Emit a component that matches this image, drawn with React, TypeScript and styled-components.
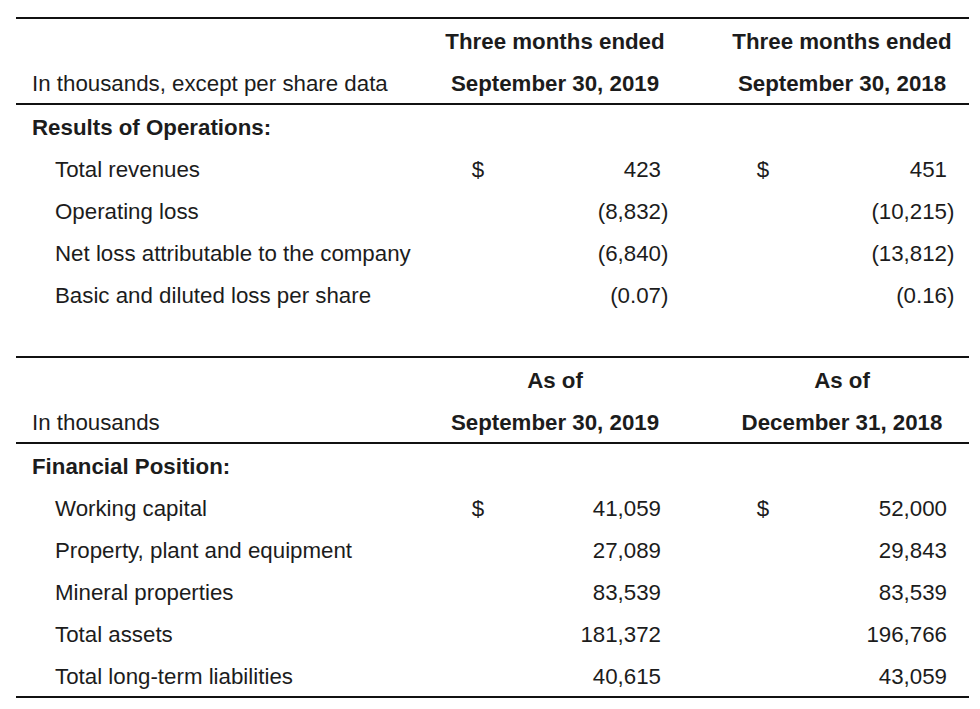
import styled, { createGlobalStyle } from "styled-components";

const GlobalStyle = createGlobalStyle`
  html, body {
    margin: 0;
    padding: 0;
    background: #ffffff;
  }
  body {
    font-family: "Liberation Sans", Arial, sans-serif;
    color: #1c1c1c;
  }
`;

const Page = styled.div`
  width: 980px;
  height: 709px;
  box-sizing: border-box;
  padding: 17px 0 0 16px;
  background: #ffffff;
`;

const Table = styled.div<{ $gapTop?: number }>`
  width: 953px;
  margin-top: ${(p) => p.$gapTop ?? 0}px;
  border-top: 2px solid #111;
  border-bottom: ${(p) => (p.$gapTop ? "2px solid #111" : "none")};
  font-size: 22.3px;
`;

const Row = styled.div`
  display: grid;
  grid-template-columns: 414px 250px 35px 254px;
  height: 42px;
  box-sizing: border-box;
  padding-top: 4px;
  align-items: center;
`;

const HeaderRow = styled(Row)<{ $ruled?: boolean }>`
  height: ${(p) => (p.$ruled ? 44 : 42)}px;
  border-bottom: ${(p) => (p.$ruled ? "2px solid #111" : "none")};
`;

const Label = styled.div<{ $indent?: boolean; $bold?: boolean }>`
  padding-left: ${(p) => (p.$indent ? 39 : 16)}px;
  font-weight: ${(p) => (p.$bold ? 700 : 400)};
  white-space: nowrap;
`;

const ColHead = styled.div`
  text-align: center;
  font-weight: 700;
  white-space: nowrap;
`;

const Figure = styled.div<{ $lead: number; $trail: number }>`
  display: grid;
  grid-template-columns: ${(p) => `${p.$lead}px 1fr ${p.$trail}px`};
  white-space: nowrap;
`;

const Dollar = styled.span`
  text-align: center;
`;

const Num = styled.span`
  text-align: right;
`;

const Paren = styled.span`
  text-align: left;
`;

type Line = { label: string; a: string; b: string; dollar?: boolean };

const ops: Line[] = [
  { label: "Total revenues", a: "423", b: "451", dollar: true },
  { label: "Operating loss", a: "(8,832)", b: "(10,215)" },
  { label: "Net loss attributable to the company", a: "(6,840)", b: "(13,812)" },
  { label: "Basic and diluted loss per share", a: "(0.07)", b: "(0.16)" },
];

const position: Line[] = [
  { label: "Working capital", a: "41,059", b: "52,000", dollar: true },
  { label: "Property, plant and equipment", a: "27,089", b: "29,843" },
  { label: "Mineral properties", a: "83,539", b: "83,539" },
  { label: "Total assets", a: "181,372", b: "196,766" },
  { label: "Total long-term liabilities", a: "40,615", b: "43,059" },
];

const Amount = ({ value, dollar, lead, trail }: { value: string; dollar?: boolean; lead: number; trail: number }) => {
  const neg = value.endsWith(")");
  return (
    <Figure $lead={lead} $trail={trail}>
      <Dollar>{dollar ? "$" : ""}</Dollar>
      <Num>{neg ? value.slice(0, -1) : value}</Num>
      <Paren>{neg ? ")" : ""}</Paren>
    </Figure>
  );
};

const Body = ({ title, lines }: { title: string; lines: Line[] }) => (
  <>
    <Row>
      <Label $bold>{title}</Label>
    </Row>
    {lines.map((l) => (
      <Row key={l.label}>
        <Label $indent>{l.label}</Label>
        <Amount value={l.a} dollar={l.dollar} lead={96} trail={19} />
        <div />
        <Amount value={l.b} dollar={l.dollar} lead={96} trail={22} />
      </Row>
    ))}
  </>
);

const App = () => (
  <Page>
    <GlobalStyle />
    <Table>
      <HeaderRow>
        <div />
        <ColHead>Three months ended</ColHead>
        <div />
        <ColHead>Three months ended</ColHead>
      </HeaderRow>
      <HeaderRow $ruled>
        <Label>In thousands, except per share data</Label>
        <ColHead>September 30, 2019</ColHead>
        <div />
        <ColHead>September 30, 2018</ColHead>
      </HeaderRow>
      <Body title="Results of Operations:" lines={ops} />
    </Table>
    <Table $gapTop={41}>
      <HeaderRow>
        <div />
        <ColHead>As of</ColHead>
        <div />
        <ColHead>As of</ColHead>
      </HeaderRow>
      <HeaderRow $ruled>
        <Label>In thousands</Label>
        <ColHead>September 30, 2019</ColHead>
        <div />
        <ColHead>December 31, 2018</ColHead>
      </HeaderRow>
      <Body title="Financial Position:" lines={position} />
    </Table>
  </Page>
);

export default App;
